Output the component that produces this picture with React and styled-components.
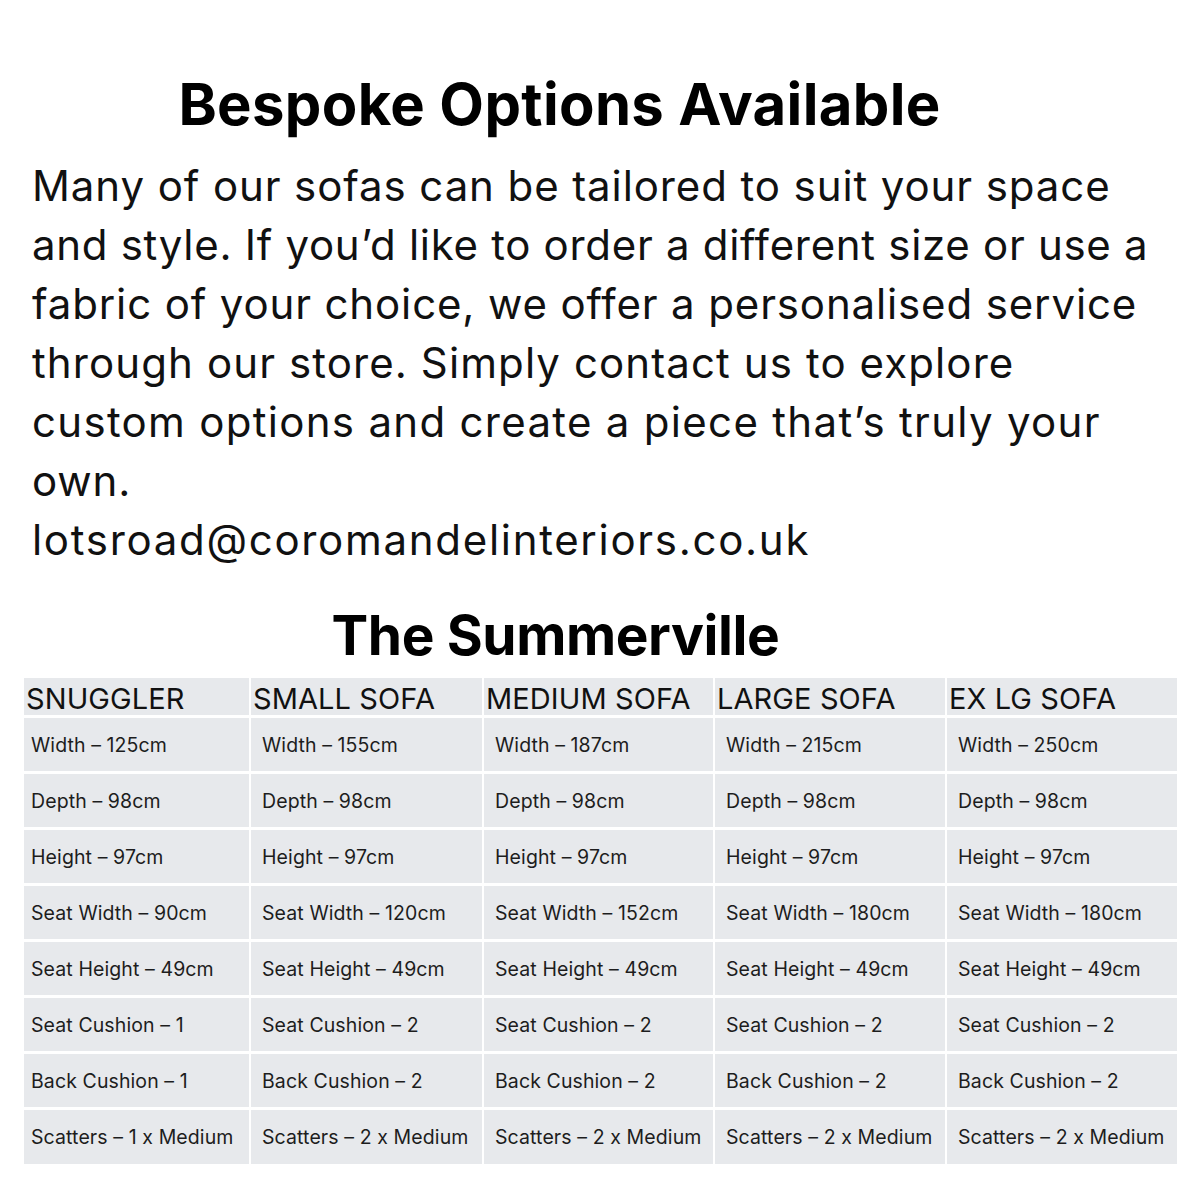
import React from "react";
import styled, { createGlobalStyle } from "styled-components";

const Global = createGlobalStyle`
  html, body { margin: 0; padding: 0; background: #fff; }
  body { font-family: Inter, "Open Sans", "Liberation Sans", sans-serif; color: #111; }
`;

const Page = styled.div`
  width: 1200px;
  height: 1200px;
  box-sizing: border-box;
  padding: 70px 23px 0 24px;
  display: flex;
  flex-direction: column;
`;

const Title = styled.h1`
  margin: 0;
  font-size: 58px;
  font-weight: 700;
  line-height: 68px;
  text-align: center;
  padding-right: 82px;
  letter-spacing: 0.35px;
  color: #000;
`;

const Body = styled.p`
  margin: 18px 0 0 8px;
  font-size: 42px;
  line-height: 59px;
  font-weight: 400;
  letter-spacing: 0.9px;
  color: #111;
  white-space: nowrap;
`;

const Line = styled.span`
  display: block;
  letter-spacing: ${(p) => p.$ls || "inherit"};
`;

const Email = styled.p`
  margin: 0 0 0 8px;
  font-size: 42px;
  line-height: 59px;
  letter-spacing: 1.7px;
  color: #111;
  white-space: nowrap;
`;

const SubTitle = styled.h2`
  margin: 34px 0 0 0;
  font-size: 55px;
  font-weight: 700;
  line-height: 64px;
  text-align: center;
  padding-right: 90px;
  letter-spacing: -0.4px;
  color: #000;
`;

const Table = styled.div`
  margin-top: 11px;
  display: flex;
  flex-direction: column;
  gap: 3px;
  width: 1153px;
`;

const Row = styled.div`
  display: grid;
  grid-template-columns: 225px 231px 229px 230px 230px;
  gap: 2px;
  height: ${(p) => p.$h}px;
`;

const Head = styled.div`
  background: #e7e9ec;
  font-size: 29px;
  line-height: 42px;
  padding-left: 2px;
  letter-spacing: 0.1px;
  color: #111;
  white-space: nowrap;
  overflow: hidden;
`;

const Cell = styled.div`
  background: #e7e9ec;
  font-size: 19.5px;
  letter-spacing: 0.1px;
  display: flex;
  align-items: center;
  padding-left: ${(p) => (p.$firstCol ? "7px" : "11px")};
  color: #1d1d1d;
  white-space: nowrap;
`;

const heads = ["SNUGGLER", "SMALL SOFA", "MEDIUM SOFA", "LARGE SOFA", "EX LG SOFA"];
const widths = ["125", "155", "187", "215", "250"];
const seatW = ["90", "120", "152", "180", "180"];
const seatC = ["1", "2", "2", "2", "2"];

const rows = [
  (i) => `Width – ${widths[i]}cm`,
  () => "Depth – 98cm",
  () => "Height – 97cm",
  (i) => `Seat Width – ${seatW[i]}cm`,
  () => "Seat Height – 49cm",
  (i) => `Seat Cushion – ${seatC[i]}`,
  (i) => `Back Cushion – ${seatC[i]}`,
  (i) => `Scatters – ${seatC[i]} x Medium`,
];

const lines = [
  ["Many of our sofas can be tailored to suit your space", "0.9px"],
  ["and style. If you’d like to order a different size or use a", "0.7px"],
  ["fabric of your choice, we offer a personalised service", "0.86px"],
  ["through our store. Simply contact us to explore", "1.1px"],
  ["custom options and create a piece that’s truly your", "1.3px"],
  ["own.", "0.9px"],
];

export default function App() {
  return (
    <>
      <Global />
      <Page>
        <Title>Bespoke Options Available</Title>
        <Body>
          {lines.map(([t, ls]) => (
            <Line key={t} $ls={ls}>
              {t}
            </Line>
          ))}
        </Body>
        <Email>lotsroad@coromandelinteriors.co.uk</Email>
        <SubTitle>The Summerville</SubTitle>
        <Table>
          <Row $h={37}>
            {heads.map((h) => (
              <Head key={h}>{h}</Head>
            ))}
          </Row>
          {rows.map((fn, r) => (
            <Row key={r} $h={r === rows.length - 1 ? 54 : 53}>
              {heads.map((h, i) => (
                <Cell key={h} $firstCol={i === 0}>
                  {fn(i)}
                </Cell>
              ))}
            </Row>
          ))}
        </Table>
      </Page>
    </>
  );
}
